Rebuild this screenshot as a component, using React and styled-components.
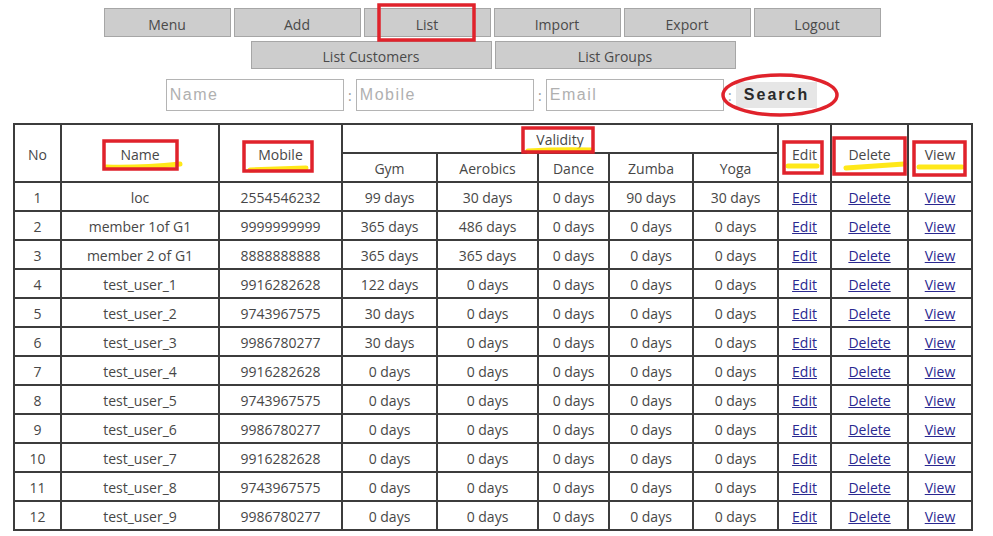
import React from 'react';
import styled, { createGlobalStyle } from 'styled-components';

const GlobalStyle = createGlobalStyle`
  body {
    margin: 0;
    background: #fff;
    font-family: "Open Sans", "Noto Sans", sans-serif;
    color: #444;
  }
`;

const Page = styled.div`
  position: relative;
  padding-top: 8px;
`;

const NavRow = styled.div`
  display: flex;
  justify-content: center;
  gap: 3px;
  margin-top: ${(p) => p.$top || 0}px;
  padding-right: ${(p) => p.$shift || 0}px;
`;

const NavButton = styled.button`
  width: ${(p) => p.$w}px;
  height: ${(p) => p.$h}px;
  background: #cdcdcd;
  border: 1px solid #a6a6a6;
  border-radius: 0;
  font-family: "Open Sans", sans-serif;
  font-size: 14px;
  color: #4a4a4a;
  padding: 0;
  padding-top: 3px;
`;

const SearchRow = styled.div`
  display: flex;
  align-items: center;
  justify-content: center;
  margin-top: 10px;
  padding-right: 10px;
`;

const Field = styled.input`
  width: 178px;
  height: 32px;
  box-sizing: border-box;
  border: 1px solid #b4b4b4;
  padding: 0 3px;
  font-family: "Liberation Sans", Arial, sans-serif;
  font-size: 16px;
  letter-spacing: 1.5px;
  outline: none;
  &::placeholder {
    color: #b0b0b0;
  }
`;

const Colon = styled.span`
  width: 12px;
  text-align: center;
  color: #999;
  font-size: 14px;
`;

const SearchButton = styled.button`
  height: 26px;
  padding: 0 8px;
  background: #e6e6e6;
  border: none;
  font-family: "Liberation Sans", Arial, sans-serif;
  font-weight: bold;
  font-size: 16px;
  letter-spacing: 2px;
  color: #2a2a2a;
`;

const Table = styled.table`
  margin: 12px 0 0 13px;
  width: 958px;
  table-layout: fixed;
  border-collapse: collapse;
  font-size: 14px;
  border: 2px solid #3c3c3c;
`;

const Cell = styled.td`
  border: 2px solid #3c3c3c;
  height: 25px;
  padding: 2px 0 0;
  text-align: center;
  white-space: nowrap;
  color: #474747;
`;

const Head = styled.th`
  border: 2px solid #3c3c3c;
  height: 25px;
  padding: 2px 0 0;
  text-align: center;
  font-weight: 400;
  color: #474747;
`;

const LinkText = styled.a`
  color: #2a2890;
  text-decoration: underline;
  cursor: pointer;
`;

const Overlay = styled.svg`
  position: absolute;
  top: 0;
  left: 0;
  pointer-events: none;
`;

const widths = [47, 158, 123, 95, 101, 71, 84, 85, 53, 77, 64];

const rows = [
  ['loc', '2554546232', 99, 30, 0, 90, 30],
  ['member 1of G1', '9999999999', 365, 486, 0, 0, 0],
  ['member 2 of G1', '8888888888', 365, 365, 0, 0, 0],
  ['test_user_1', '9916282628', 122, 0, 0, 0, 0],
  ['test_user_2', '9743967575', 30, 0, 0, 0, 0],
  ['test_user_3', '9986780277', 30, 0, 0, 0, 0],
  ['test_user_4', '9916282628', 0, 0, 0, 0, 0],
  ['test_user_5', '9743967575', 0, 0, 0, 0, 0],
  ['test_user_6', '9986780277', 0, 0, 0, 0, 0],
  ['test_user_7', '9916282628', 0, 0, 0, 0, 0],
  ['test_user_8', '9743967575', 0, 0, 0, 0, 0],
  ['test_user_9', '9986780277', 0, 0, 0, 0, 0],
];

// annotation boxes drawn over the screenshot
const boxes = [
  [379, 5, 95, 35],
  [104, 141, 73, 28],
  [244, 142, 68, 29],
  [523, 128, 70, 24],
  [784, 142, 38, 31],
  [834, 138, 71, 36],
  [914, 142, 51, 33],
];

const marks = [
  'M106 167 Q140 168 180 164',
  'M250 170 Q280 169 306 168',
  'M528 151 Q560 149 592 150',
  'M788 166 L817 166',
  'M846 168 Q875 166 904 164',
  'M919 167 L962 167',
];

const App = () => (
  <Page>
    <GlobalStyle />
    <NavRow $shift={9}>
      {['Menu', 'Add', 'List', 'Import', 'Export', 'Logout'].map((t) => (
        <NavButton key={t} $w={127} $h={29}>{t}</NavButton>
      ))}
    </NavRow>
    <NavRow $top={4} $shift={7}>
      <NavButton $w={241} $h={28}>List Customers</NavButton>
      <NavButton $w={241} $h={28}>List Groups</NavButton>
    </NavRow>
    <SearchRow>
      <Field placeholder="Name" />
      <Colon>:</Colon>
      <Field placeholder="Mobile" />
      <Colon>:</Colon>
      <Field placeholder="Email" />
      <Colon>:</Colon>
      <SearchButton>Search</SearchButton>
    </SearchRow>
    <Table>
      <colgroup>
        {widths.map((w, i) => <col key={i} style={{ width: w }} />)}
      </colgroup>
      <thead>
        <tr>
          <Head rowSpan={2}>No</Head>
          <Head rowSpan={2}>Name</Head>
          <Head rowSpan={2}>Mobile</Head>
          <Head colSpan={5}>Validity</Head>
          <Head rowSpan={2}>Edit</Head>
          <Head rowSpan={2}>Delete</Head>
          <Head rowSpan={2}>View</Head>
        </tr>
        <tr>
          {['Gym', 'Aerobics', 'Dance', 'Zumba', 'Yoga'].map((t) => (
            <Head key={t}>{t}</Head>
          ))}
        </tr>
      </thead>
      <tbody>
        {rows.map((r, i) => (
          <tr key={i}>
            <Cell>{i + 1}</Cell>
            <Cell>{r[0]}</Cell>
            <Cell>{r[1]}</Cell>
            {r.slice(2).map((d, j) => <Cell key={j}>{d} days</Cell>)}
            <Cell><LinkText>Edit</LinkText></Cell>
            <Cell><LinkText>Delete</LinkText></Cell>
            <Cell><LinkText>View</LinkText></Cell>
          </tr>
        ))}
      </tbody>
    </Table>
    <Overlay width="993" height="536">
      {marks.map((d, i) => (
        <path key={i} d={d} stroke="#ffe600" strokeWidth="5" strokeLinecap="round" fill="none" opacity="0.9" />
      ))}
      {boxes.map(([x, y, w, h], i) => (
        <rect key={i} x={x} y={y} width={w} height={h} stroke="#e0222b" strokeWidth="3.5" fill="none" />
      ))}
      <ellipse cx="780" cy="95" rx="57" ry="20" stroke="#e0222b" strokeWidth="3.5" fill="none" />
    </Overlay>
  </Page>
);

export default App;
